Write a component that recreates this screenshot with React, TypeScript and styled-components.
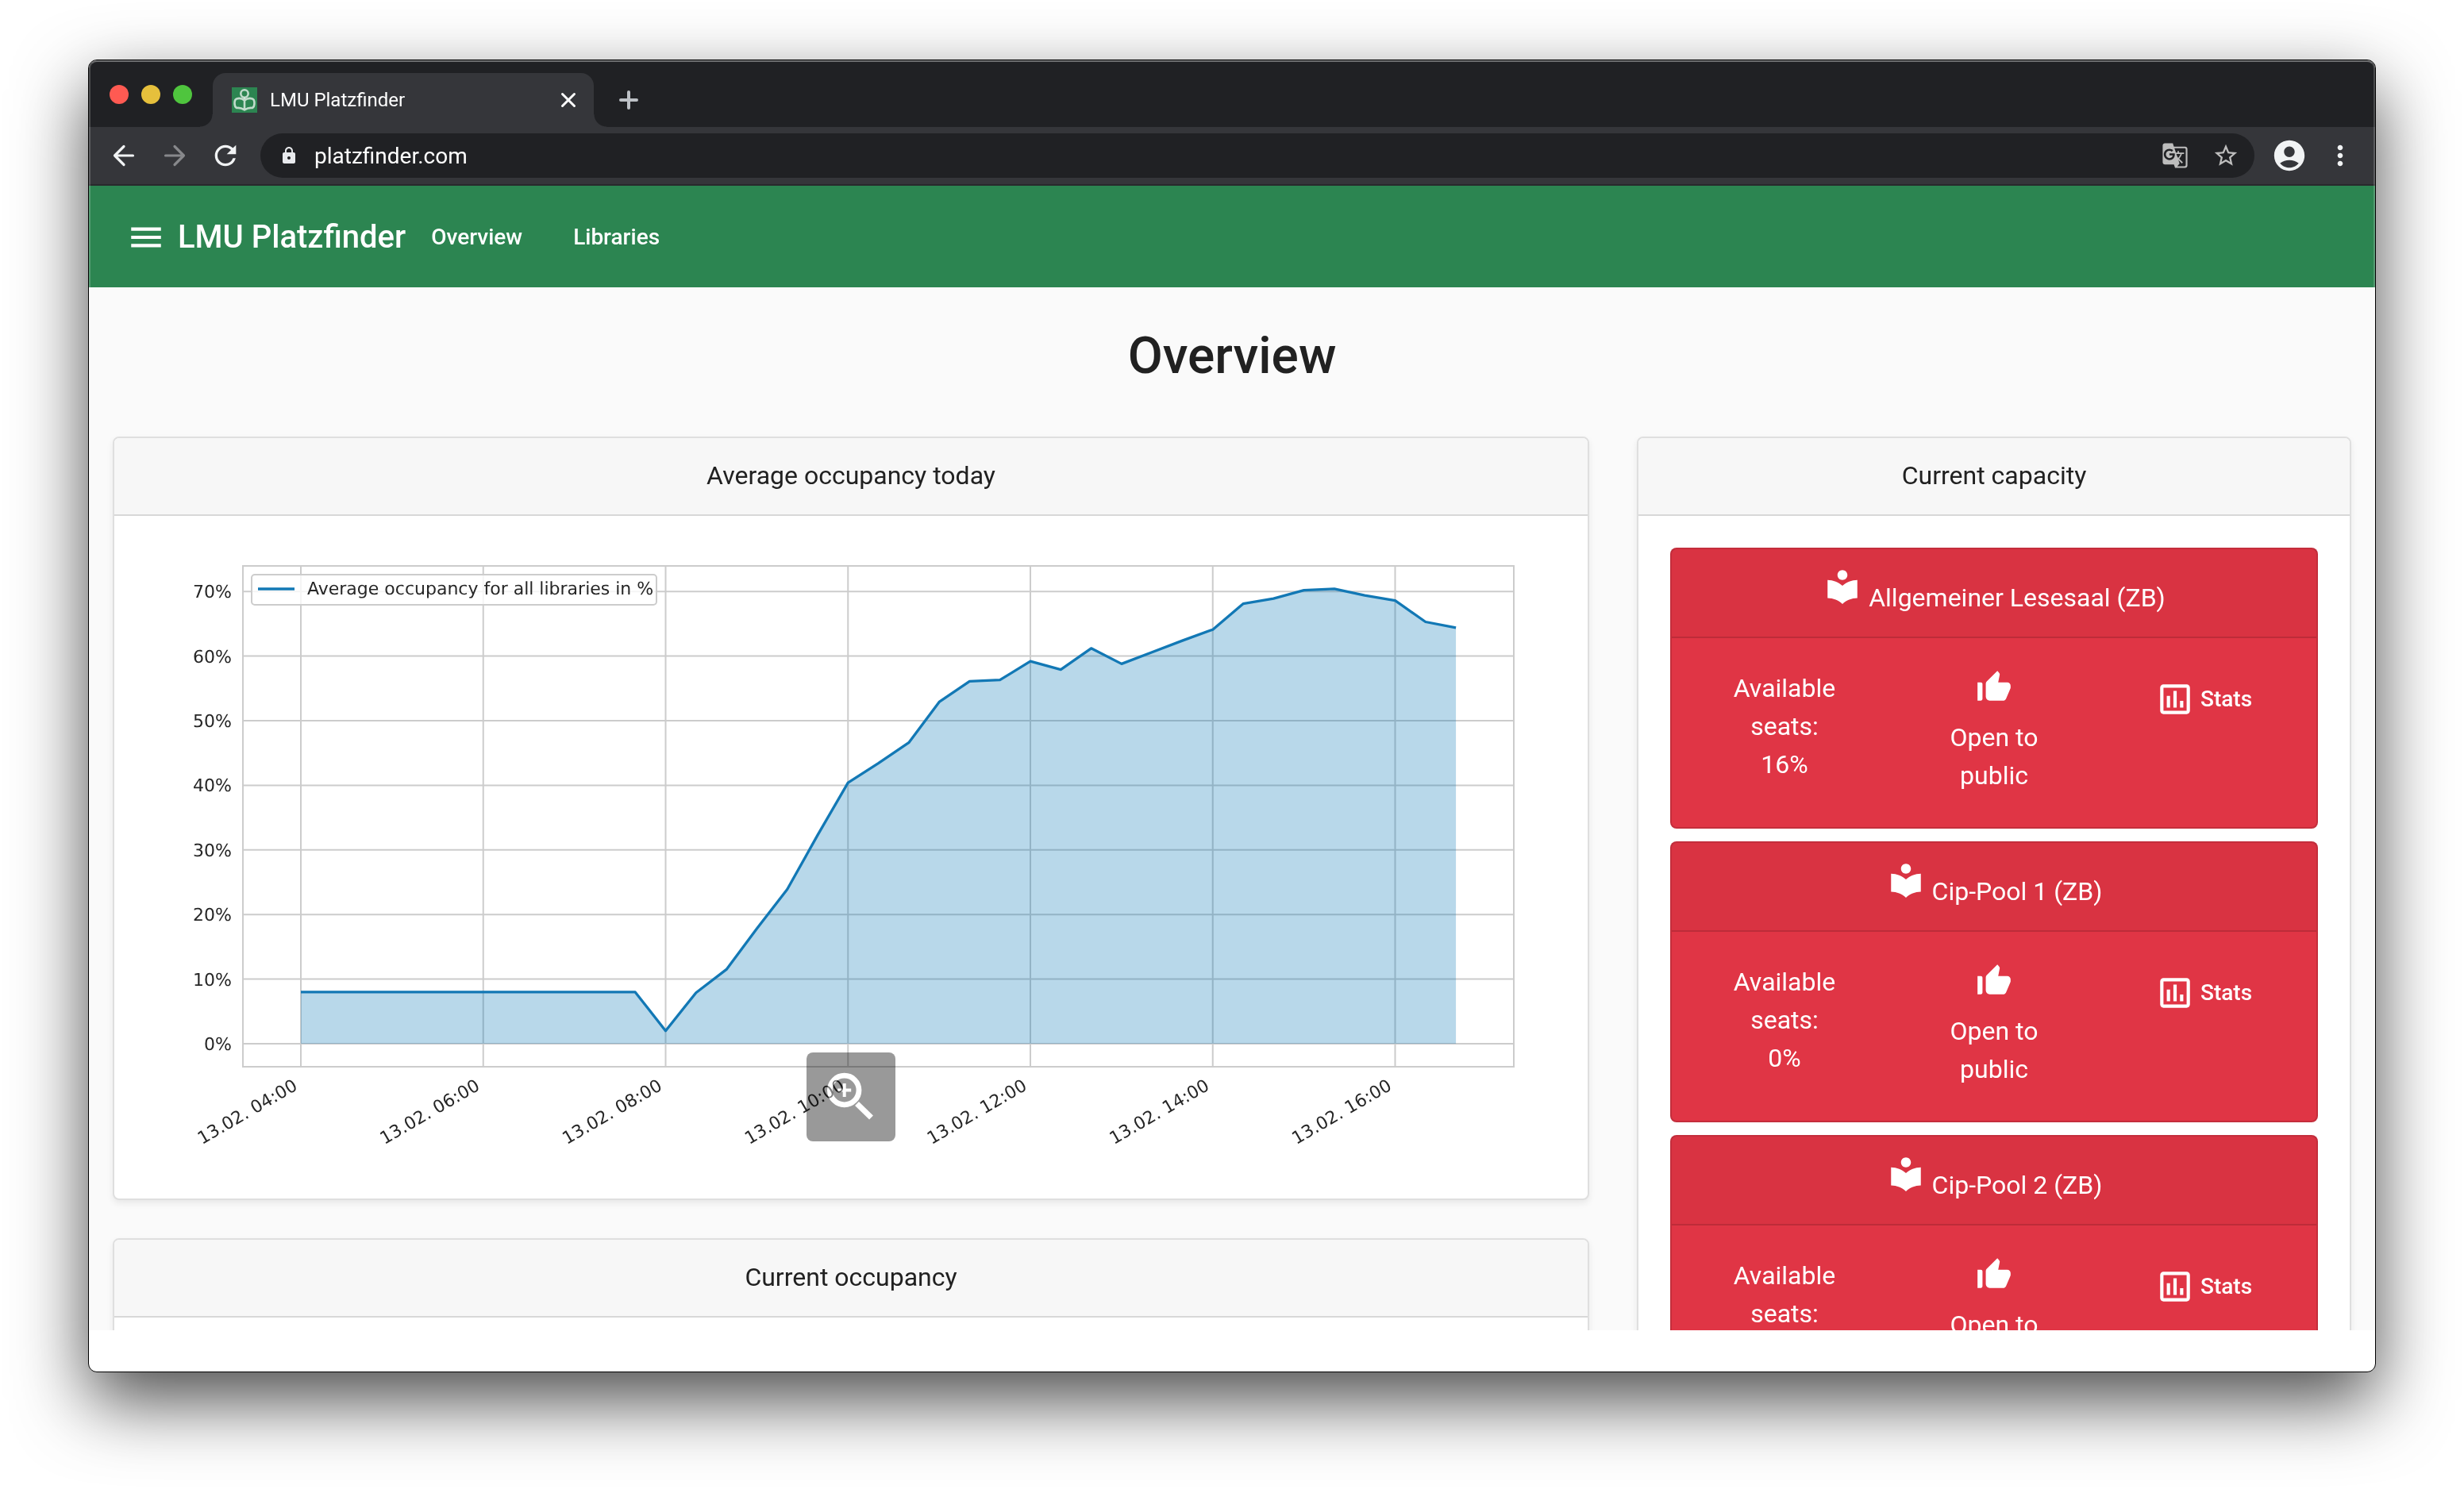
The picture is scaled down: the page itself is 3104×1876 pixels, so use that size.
import React from "react";
import styled, { createGlobalStyle } from "styled-components";
import {
  MdAccountCircle,
  MdGTranslate,
  MdLocalLibrary,
  MdLock,
  MdMenu,
  MdMoreVert,
  MdOutlineInsertChartOutlined,
  MdRefresh,
  MdStarBorder,
  MdThumbUpAlt,
} from "react-icons/md";

const GlobalStyle = createGlobalStyle`
  *, *::before, *::after {
    box-sizing: border-box;
  }
  body {
    margin: 0;
    background: #fff;
    color: #212121;
    font-family: Roboto, "Liberation Sans", sans-serif;
    font-size: 32px;
    line-height: 48px;
  }
  button {
    padding: 0;
    border: 0;
    background: none;
    color: inherit;
    font: inherit;
    cursor: pointer;
  }
  h1, h2, h3, p {
    margin: 0;
    font-weight: 400;
  }
`;

const Desktop = styled.div`
  display: flex;
  height: 100vh;
  padding: 75px 111px 147px;
`;

const BrowserWindow = styled.div`
  position: relative;
  display: flex;
  flex: 1;
  flex-direction: column;
  min-width: 0;
  overflow: hidden;
  border: 1px solid #000;
  border-radius: 11px;
  background: #fff;
  box-shadow: 0 36px 90px rgba(0, 0, 0, 0.7);

  &::after {
    content: "";
    position: absolute;
    inset: 0;
    border: 2px solid rgba(255, 255, 255, 0.2);
    border-top-color: rgba(255, 255, 255, 0.35);
    border-radius: 10px;
    pointer-events: none;
  }
`;

const TabStrip = styled.div`
  display: flex;
  flex: none;
  align-items: center;
  height: 84px;
  padding: 2px 26px 0;
  background: #202124;
`;

const WindowControls = styled.div`
  display: flex;
  gap: 16px;
  margin-right: 26px;
`;

const WindowControl = styled.button<{ $color: string }>`
  width: 24px;
  height: 24px;
  border-radius: 50%;
  background: ${(p) => p.$color};
`;

const Tab = styled.div`
  position: relative;
  display: flex;
  align-items: center;
  align-self: flex-end;
  gap: 16px;
  width: 480px;
  height: 68px;
  padding: 0 20px 0 24px;
  border-radius: 16px 16px 0 0;
  background: #35363a;
  color: #fff;
  font-size: 24px;
  line-height: 32px;

  &::before,
  &::after {
    content: "";
    position: absolute;
    bottom: 0;
    width: 16px;
    height: 16px;
  }
  &::before {
    right: 100%;
    background: radial-gradient(circle at 0 0, transparent 15px, #35363a 16px);
  }
  &::after {
    left: 100%;
    background: radial-gradient(circle at 100% 0, transparent 15px, #35363a 16px);
  }
`;

const TabTitle = styled.span`
  flex: 1;
`;

const TabButton = styled.button<{ $color: string }>`
  display: flex;
  color: ${(p) => p.$color};
`;

const NewTab = styled(TabButton)`
  margin-left: 32px;
  margin-top: 14px;
`;

const Toolbar = styled.div`
  display: flex;
  flex: none;
  align-items: center;
  gap: 8px;
  height: 74px;
  padding: 0 16px;
  border-bottom: 2px solid #28292c;
  background: #35363a;
`;

const ToolButton = styled.button<{ $color?: string; $size?: number }>`
  display: flex;
  flex: none;
  align-items: center;
  justify-content: center;
  width: 56px;
  height: 56px;
  color: ${(p) => p.$color ?? "#f1f3f4"};
  font-size: ${(p) => p.$size ?? 40}px;
`;

const AddressBar = styled.div`
  display: flex;
  flex: 1;
  align-items: center;
  gap: 8px;
  height: 56px;
  margin: 0 8px;
  padding: 0 8px 0 24px;
  border-radius: 28px;
  background: #202124;
  color: #e8eaed;
  font-size: 24px;
`;

const AddressInput = styled.input`
  flex: 1;
  min-width: 0;
  height: 48px;
  padding: 0 12px;
  border: 0;
  outline: 0;
  background: none;
  color: #fff;
  font-family: inherit;
  font-size: 28px;
`;

const Viewport = styled.div`
  flex: 1;
  min-height: 0;
  margin-bottom: 52px;
  overflow: hidden;
  background: #fafafa;
`;

const NavBar = styled.header`
  display: flex;
  align-items: center;
  height: 128px;
  padding: 2px 47px 0;
  background: #2c8551;
  color: #fff;
  font-weight: 500;
`;

const MenuButton = styled.button`
  display: flex;
  font-size: 50px;
`;

const Brand = styled.span`
  margin-left: 15px;
  font-size: 40px;
`;

const NavLink = styled.a`
  padding: 0 32px;
  color: inherit;
  font-size: 28px;
  line-height: 72px;
  text-decoration: none;
`;

const PageTitle = styled.h1`
  padding: 49px 0 63px;
  font-size: 64px;
  font-weight: 500;
  line-height: 76px;
  text-align: center;
`;

const Columns = styled.main`
  display: grid;
  grid-template-columns: 2fr 1fr;
  align-items: start;
`;

const Column = styled.div`
  display: flex;
  flex-direction: column;
  gap: 48px;
  min-width: 0;
  padding: 0 30px 48px;
`;

const Card = styled.section`
  border: 2px solid #dfdfdf;
  border-radius: 8px;
  background: #fff;
  box-shadow: 0 4px 8px rgba(0, 0, 0, 0.075);
`;

const CardHeader = styled.h2`
  padding: 23px 40px 25px;
  border-bottom: 2px solid #d8d8d8;
  border-radius: 6px 6px 0 0;
  background: #f7f7f7;
  font-size: 32px;
  text-align: center;
`;

const CardBody = styled.div`
  padding: 40px;
`;

const LibraryList = styled(CardBody)`
  display: flex;
  flex-direction: column;
  gap: 16px;
`;

const LibraryCard = styled.article`
  border: 2px solid rgba(0, 0, 0, 0.125);
  border-radius: 8px;
  background: #e03545;
  color: #fff;
  text-align: center;

  svg {
    width: 50px;
    height: 50px;
  }
`;

const IconLine = styled.span`
  display: block;
  height: 62px;

  svg {
    margin-top: -2px;
    vertical-align: baseline;
  }
`;

const LibraryName = styled.h3`
  padding: 24px 40px;
  border-bottom: 2px solid rgba(0, 0, 0, 0.125);
  background: rgba(0, 0, 0, 0.03);
  font-size: 32px;
`;

const LibraryFacts = styled.div`
  display: grid;
  grid-template-columns: repeat(3, 1fr);
  align-items: start;
  padding: 39px 10px 41px;
`;

const Fact = styled.p`
  padding: 0 30px;
`;

const StatsButton = styled.button`
  display: flex;
  align-items: center;
  justify-content: center;
  gap: 7px;
  height: 76px;
  font-size: 28px;
  font-weight: 500;
`;

const ChartFrame = styled.div`
  position: relative;
`;

const ChartDrawing = styled.svg`
  display: block;
  width: 100%;
  height: auto;
  font-family: "DejaVu Sans", sans-serif;
  font-size: 22px;
  text-rendering: geometricPrecision;
  fill: #262626;
`;

const ZoomButton = styled.button`
  position: absolute;
  bottom: 32px;
  left: calc(50% - 56px);
  display: flex;
  width: 112px;
  height: 112px;
  border-radius: 8px;
  background: rgba(0, 0, 0, 0.4);
  color: #666;

  svg {
    mix-blend-mode: plus-lighter;
  }
`;

const occupancy = [
  8, 8, 8, 8, 8, 8, 8, 8, 8, 8, 8, 8, 2, 7.9, 11.5, 17.8, 23.9, 32.3, 40.4, 43.4,
  46.6, 52.9, 56.1, 56.3, 59.2, 57.9, 61.2, 58.8, 60.6, 62.4, 64.1, 68.1, 68.9,
  70.2, 70.4, 69.4, 68.6, 65.3, 64.4,
];
const hours = ["04", "06", "08", "10", "12", "14", "16"];
const percents = [0, 10, 20, 30, 40, 50, 60, 70];

const plot = { left: 122, right: 1723, top: 23, bottom: 654 };
const xAt = (step: number) => 195 + (step * 229.75) / 6;
const yAt = (value: number) => 625 - value * 8.14;

function OccupancyChart() {
  const line = occupancy.map((v, i) => `${xAt(i).toFixed(1)},${yAt(v).toFixed(1)}`).join(" ");
  const lastX = xAt(occupancy.length - 1);
  return (
    <ChartDrawing viewBox="0 0 1776 780" role="img" aria-label="Average occupancy today">
      <g stroke="#ccc" strokeWidth="2" fill="none">
        {percents.map((p) => (
          <line key={p} x1={plot.left} x2={plot.right} y1={yAt(p)} y2={yAt(p)} />
        ))}
        {hours.map((h, i) => (
          <line key={h} x1={xAt(i * 6)} x2={xAt(i * 6)} y1={plot.top} y2={plot.bottom} />
        ))}
      </g>
      <polygon
        points={`${xAt(0)},${yAt(0)} ${line} ${lastX},${yAt(0)}`}
        fill="#0173b2"
        fillOpacity="0.28"
      />
      <polyline points={line} fill="none" stroke="#1278b5" strokeWidth="3.3" strokeLinejoin="round" />
      <rect
        x={plot.left}
        y={plot.top}
        width={plot.right - plot.left}
        height={plot.bottom - plot.top}
        fill="none"
        stroke="#ccc"
        strokeWidth="2"
      />
      {percents.map((p) => (
        <text key={p} x="108" y={yAt(p) + 8} textAnchor="end">
          {p}%
        </text>
      ))}
      {hours.map((h, i) => (
        <text
          key={h}
          textAnchor="end"
          transform={`translate(${xAt(i * 6) - 3} 682) rotate(-30)`}
        >
          13.02. {h}:00
        </text>
      ))}
      <rect x="133" y="34" width="510" height="38" rx="4" fill="#fff" fillOpacity="0.8" stroke="#ccc" strokeWidth="2" />
      <line x1="141" x2="187" y1="52" y2="52" stroke="#1278b5" strokeWidth="3.3" />
      <text x="203" y="59">Average occupancy for all libraries in %</text>
    </ChartDrawing>
  );
}

const ArrowIcon = ({ forward = false }: { forward?: boolean }) => (
  <svg width="28" height="28" viewBox="0 0 28 28" fill="none" stroke="currentColor" strokeWidth="3.2" strokeLinecap="round" strokeLinejoin="round">
    <path d={forward ? "M2.5 14H25.5M14 2.5 25.5 14 14 25.5" : "M25.5 14H2.5M14 2.5 2.5 14 14 25.5"} />
  </svg>
);

const Favicon = () => (
  <svg width="32" height="32" viewBox="0 0 32 32" fill="none">
    <rect width="32" height="32" fill="#2c8551" />
    <g stroke="#fff" strokeOpacity="0.7" strokeWidth="2.6" strokeLinejoin="round">
      <circle cx="16" cy="8" r="4.7" />
      <path d="M16 16.500C13 14 9 13.500 6 14.500Q3.500 15.500 3.500 20T6 26C9 25.500 13 26.500 16 28.500C19 26.500 23 25.500 26 26Q28.500 24.500 28.500 20T26 14.500C23 13.500 19 14 16 16.500ZM16 13V28" />
    </g>
  </svg>
);

const libraries = [
  { name: "Allgemeiner Lesesaal (ZB)", seats: "16%" },
  { name: "Cip-Pool 1 (ZB)", seats: "0%" },
  { name: "Cip-Pool 2 (ZB)", seats: "0%" },
];

function Library({ name, seats }: { name: string; seats: string }) {
  return (
    <LibraryCard>
      <LibraryName>
        <IconLine>
          <MdLocalLibrary /> {name}
        </IconLine>
      </LibraryName>
      <LibraryFacts>
        <Fact>
          Available seats:
          <br />
          {seats}
        </Fact>
        <Fact>
          <IconLine>
            <MdThumbUpAlt />
          </IconLine>
          Open to
          <br />
          public
        </Fact>
        <StatsButton type="button">
          <MdOutlineInsertChartOutlined />
          Stats
        </StatsButton>
      </LibraryFacts>
    </LibraryCard>
  );
}

export default function App() {
  return (
    <>
      <GlobalStyle />
      <Desktop>
        <BrowserWindow>
          <TabStrip>
            <WindowControls>
              <WindowControl $color="#ff5a52" aria-label="Close window" />
              <WindowControl $color="#e6c03c" aria-label="Minimize window" />
              <WindowControl $color="#4fc53e" aria-label="Maximize window" />
            </WindowControls>
            <Tab>
              <Favicon />
              <TabTitle>LMU Platzfinder</TabTitle>
              <TabButton $color="#fff" aria-label="Close tab">
                <svg width="24" height="24" viewBox="0 0 24 24" stroke="currentColor" strokeWidth="3" strokeLinecap="round">
                  <path d="M4.500 4.500 19.500 19.500M19.500 4.500 4.500 19.500" />
                </svg>
              </TabButton>
            </Tab>
            <NewTab $color="#bdc1c6" aria-label="New tab">
              <svg width="24" height="24" viewBox="0 0 24 24" stroke="currentColor" strokeWidth="4" strokeLinecap="round">
                <path d="M12 2V22M2 12H22" />
              </svg>
            </NewTab>
          </TabStrip>
          <Toolbar>
            <ToolButton aria-label="Back">
              <ArrowIcon />
            </ToolButton>
            <ToolButton $color="#87888b" aria-label="Forward">
              <ArrowIcon forward />
            </ToolButton>
            <ToolButton aria-label="Reload">
              <MdRefresh />
            </ToolButton>
            <AddressBar>
              <MdLock />
              <AddressInput aria-label="Address" defaultValue="platzfinder.com" />
              <ToolButton $color="#bdbdbd" $size={34} aria-label="Translate page">
                <MdGTranslate />
              </ToolButton>
              <ToolButton $color="#bdbdbd" $size={34} aria-label="Bookmark page">
                <MdStarBorder />
              </ToolButton>
            </AddressBar>
            <ToolButton $size={46} aria-label="Profile">
              <MdAccountCircle />
            </ToolButton>
            <ToolButton aria-label="Browser menu">
              <MdMoreVert />
            </ToolButton>
          </Toolbar>
          <Viewport>
            <NavBar>
              <MenuButton aria-label="Menu">
                <MdMenu />
              </MenuButton>
              <Brand>LMU Platzfinder</Brand>
              <nav>
                <NavLink href="#overview">Overview</NavLink>
                <NavLink href="#libraries">Libraries</NavLink>
              </nav>
            </NavBar>
            <PageTitle>Overview</PageTitle>
            <Columns>
              <Column>
                <Card>
                  <CardHeader>Average occupancy today</CardHeader>
                  <CardBody>
                    <ChartFrame>
                      <OccupancyChart />
                      <ZoomButton aria-label="Enlarge chart">
                        <svg width="112" height="112" viewBox="0 0 112 112" fill="none" stroke="currentColor">
                          <circle cx="47.700" cy="47.500" r="18.300" strokeWidth="6.800" />
                          <path d="M47.700 39V56M39.200 47.500H56.200" strokeWidth="4" />
                          <path d="M63.500 64.500 81.500 82" strokeWidth="7" />
                        </svg>
                      </ZoomButton>
                    </ChartFrame>
                  </CardBody>
                </Card>
                <Card>
                  <CardHeader>Current occupancy</CardHeader>
                  <CardBody />
                </Card>
              </Column>
              <Column>
                <Card>
                  <CardHeader>Current capacity</CardHeader>
                  <LibraryList>
                    {libraries.map((l) => (
                      <Library key={l.name} {...l} />
                    ))}
                  </LibraryList>
                </Card>
              </Column>
            </Columns>
          </Viewport>
        </BrowserWindow>
      </Desktop>
    </>
  );
}
